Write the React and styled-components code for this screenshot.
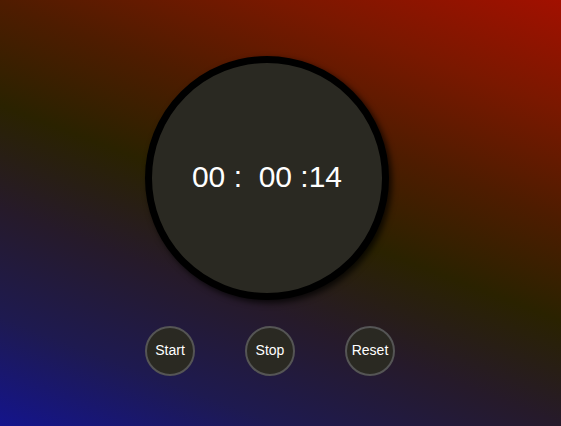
import { createGlobalStyle } from "styled-components";
import styled from "styled-components";

const GlobalStyle = createGlobalStyle`
  html, body {
    margin: 0;
    height: 100%;
  }
  body {
    font-family: "Liberation Sans", Arial, sans-serif;
  }
`;

const Page = styled.div`
  min-height: 100vh;
  box-sizing: border-box;
  padding: 56px 0 0 145px;
  display: flex;
  flex-direction: column;
  align-items: flex-start;
  gap: 26px;
  background: linear-gradient(
    21deg,
    #14148c 0%,
    #1e1a50 17%,
    #261a2a 34%,
    #2a2200 50%,
    #4e1c00 66%,
    #7a1800 83%,
    #a21000 100%
  );
`;

const Dial = styled.div`
  width: 230px;
  height: 230px;
  border: 7px solid #000;
  border-radius: 50%;
  background: #2a2922;
  box-shadow: 3px 3px 6px rgba(0, 0, 0, 0.75);
  display: flex;
  align-items: center;
  justify-content: center;
`;

const Time = styled.div`
  color: #fff;
  font-size: 30px;
  white-space: pre;
  margin-top: -2px;
`;

const Controls = styled.div`
  display: flex;
  gap: 50px;
`;

const Button = styled.button`
  width: 50px;
  height: 50px;
  border-radius: 50%;
  border: 2px solid #555;
  background: #2a2922;
  color: #fff;
  font-family: "Liberation Sans", Arial, sans-serif;
  font-size: 14px;
  padding: 0 0 2px;
  cursor: pointer;
`;

const App = () => {
  const minutes = "00";
  const seconds = "00";
  const hundredths = "14";

  return (
    <>
      <GlobalStyle />
      <Page>
        <Dial>
          <Time>{`${minutes} :  ${seconds} :${hundredths}`}</Time>
        </Dial>
        <Controls>
          <Button>Start</Button>
          <Button>Stop</Button>
          <Button>Reset</Button>
        </Controls>
      </Page>
    </>
  );
};

export default App;
